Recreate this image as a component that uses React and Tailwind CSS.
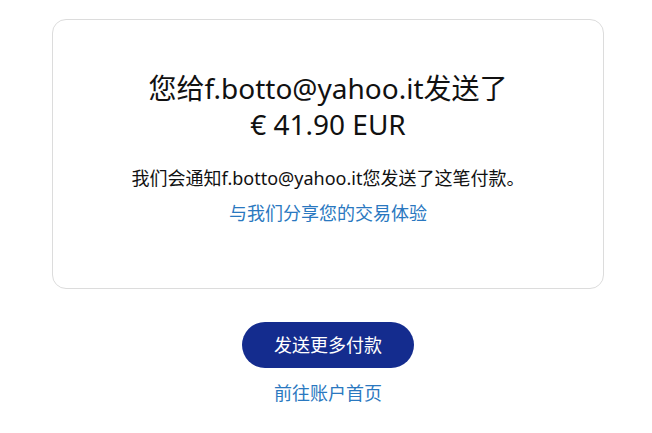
export default function App() {
  return (
    <div
      className="w-[652px] h-[433px] bg-white overflow-hidden"
      style={{ fontFamily: '"Noto Sans", "Noto Sans CJK SC", sans-serif' }}
    >
      <div className="ml-[52px] mt-[19px] w-[552px] h-[270px] rounded-[14px] border border-[#dcdcdc] flex flex-col items-center pt-[50px]">
        <h1 className="text-[28px] leading-[36px] text-[#111111] text-center font-normal">
          <div>您给f.botto@yahoo.it发送了</div>
          <div>€ 41.90 EUR</div>
        </h1>
        <p className="mt-[23px] text-[18px] leading-[27px] text-[#111111]">
          我们会通知f.botto@yahoo.it您发送了这笔付款。
        </p>
        <a className="mt-[8px] text-[18px] leading-[27px] text-[#2a78c0]">
          与我们分享您的交易体验
        </a>
      </div>
      <div className="flex flex-col items-center ml-[52px] w-[552px]">
        <button className="mt-[33px] h-[46px] px-[32px] rounded-full bg-[#142c8e] text-white text-[18px] leading-[27px]">
          发送更多付款
        </button>
        <a className="mt-[12px] text-[18px] leading-[27px] text-[#2a78c0]">
          前往账户首页
        </a>
      </div>
    </div>
  );
}
